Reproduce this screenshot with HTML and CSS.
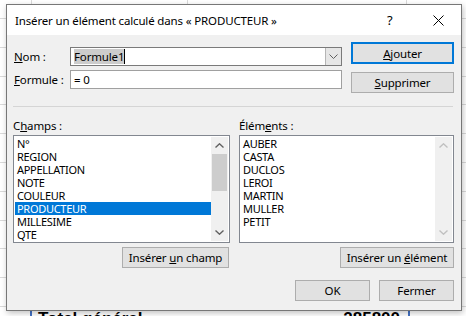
FILE: index.html
```html
<!DOCTYPE html>
<html lang="fr">
<head>
    <meta charset="UTF-8">
    <title>Insérer un élément calculé</title>
    <link rel="stylesheet" href="styles.css">
</head>
<body>

<div class="sheet">
    <div class="total-row">
        <span class="total-label">Total général</span>
        <span class="total-value">285800</span>
    </div>
</div>

<div class="dialog">
    <div class="titlebar">
        <span class="title">Insérer un élément calculé dans « PRODUCTEUR »</span>
        <span class="tb-help">?</span>
        <span class="tb-close">
            <svg width="11" height="11" viewBox="0 0 11 11"><path d="M0.5 0.5 L10.5 10.5 M10.5 0.5 L0.5 10.5" stroke="#000" stroke-width="1" fill="none"/></svg>
        </span>
    </div>

    <div class="content">
        <div class="top">
            <div class="fields">
                <div class="field-row">
                    <span class="label"><u>N</u>om :</span>
                    <div class="combo">
                        <span class="combo-text"><span class="sel">Formule1</span><span class="caret"></span></span>
                        <span class="combo-btn">
                            <svg width="9" height="5" viewBox="0 0 9 5"><path d="M0.5 0.5 L4.5 4.5 L8.5 0.5" stroke="#606060" fill="none"/></svg>
                        </span>
                    </div>
                </div>
                <div class="field-row">
                    <span class="label"><u>F</u>ormule :</span>
                    <div class="input">= 0</div>
                </div>
            </div>
            <div class="side-buttons">
                <button class="btn btn-default"><u>A</u>jouter</button>
                <button class="btn btn-side"><u>S</u>upprimer</button>
            </div>
        </div>

        <div class="sep"></div>

        <div class="lists">
            <div class="list-col col-fields">
                <div class="list-label">C<u>h</u>amps :</div>
                <div class="listbox">
                    <ul class="items">
                        <li>N°</li>
                        <li>REGION</li>
                        <li>APPELLATION</li>
                        <li>NOTE</li>
                        <li>COULEUR</li>
                        <li class="selected">PRODUCTEUR</li>
                        <li>MILLESIME</li>
                        <li>QTE</li>
                    </ul>
                    <div class="scrollbar">
                        <span class="arrow">
                            <svg width="9" height="5" viewBox="0 0 9 5"><path d="M0.5 4.5 L4.5 0.8 L8.5 4.5" stroke="#606060" stroke-width="1.4" fill="none"/></svg>
                        </span>
                        <span class="track"><span class="thumb"></span></span>
                        <span class="arrow">
                            <svg width="9" height="5" viewBox="0 0 9 5"><path d="M0.5 0.5 L4.5 4.2 L8.5 0.5" stroke="#606060" stroke-width="1.4" fill="none"/></svg>
                        </span>
                    </div>
                </div>
                <div class="col-actions">
                    <button class="btn btn-field">Insérer <u>u</u>n champ</button>
                </div>
            </div>

            <div class="list-col col-items">
                <div class="list-label">Élém<u>e</u>nts :</div>
                <div class="listbox">
                    <ul class="items">
                        <li>AUBER</li>
                        <li>CASTA</li>
                        <li>DUCLOS</li>
                        <li>LEROI</li>
                        <li>MARTIN</li>
                        <li>MULLER</li>
                        <li>PETIT</li>
                    </ul>
                    <div class="scrollbar disabled">
                        <span class="arrow">
                            <svg width="9" height="5" viewBox="0 0 9 5"><path d="M0.5 4.5 L4.5 0.8 L8.5 4.5" stroke="#c0c0c0" stroke-width="1.4" fill="none"/></svg>
                        </span>
                        <span class="track"></span>
                        <span class="arrow">
                            <svg width="9" height="5" viewBox="0 0 9 5"><path d="M0.5 0.5 L4.5 4.2 L8.5 0.5" stroke="#c0c0c0" stroke-width="1.4" fill="none"/></svg>
                        </span>
                    </div>
                </div>
                <div class="col-actions">
                    <button class="btn btn-item">Insérer un <u>é</u>lément</button>
                </div>
            </div>
        </div>

        <div class="footer">
            <button class="btn btn-footer">OK</button>
            <button class="btn btn-footer">Fermer</button>
        </div>
    </div>
</div>

</body>
</html>
```

FILE: styles.css
```css
body {
    margin: 0;
    padding: 0;
    width: 466px;
    height: 316px;
    overflow: hidden;
    font-family: "Noto Sans", "Open Sans", sans-serif;
    font-size: 11.5px;
    letter-spacing: -0.15px;
    color: #000;
    position: relative;
}

/* feuille Excel derrière la boîte */
.sheet {
    height: 316px;
    background-color: #fff;
    background-image:
        linear-gradient(to right, transparent 31px, #dadada 31px, #dadada 32px, transparent 32px),
        linear-gradient(to right, transparent 187px, #dadada 187px, #dadada 188px, transparent 188px),
        linear-gradient(to right, transparent 406px, #dadada 406px, #dadada 407px, transparent 407px),
        repeating-linear-gradient(to bottom, transparent 0, transparent 18px, #dadada 18px, #dadada 19px, transparent 19px, transparent 28.8px);
    padding-top: 309px;
    box-sizing: border-box;
}

.total-row {
    display: flex;
    margin-left: 30px;
    width: 376px;
    height: 7px;
    overflow: hidden;
    border-left: 2px solid #4472c4;
    border-right: 2px solid #4472c4;
    background: #fff;
    font-family: "Liberation Sans", Arial, sans-serif;
    font-weight: bold;
    font-size: 17px;
    letter-spacing: 0;
    line-height: 20px;
}

.total-label {
    padding-left: 6px;
    flex: 1;
}

.total-value {
    padding-right: 8px;
}

/* boîte de dialogue */
.dialog {
    position: absolute;
    left: 6px;
    top: 4px;
    width: 456px;
    height: 307px;
    box-sizing: border-box;
    border: 1px solid #777;
    background: #f0f0f0;
    box-shadow: 1px 2px 6px rgba(0, 0, 0, 0.25);
}

.titlebar {
    height: 30px;
    background: #fff;
    display: flex;
    align-items: center;
    padding-left: 8px;
}

.title {
    flex: 1;
}

.tb-help {
    width: 20px;
    font-size: 13px;
    margin-right: 26px;
}

.tb-close {
    width: 28px;
    display: flex;
    align-items: center;
}

.content {
    padding: 7px 7px 0 6px;
}

.top {
    display: flex;
    justify-content: space-between;
}

.fields {
    width: 329px;
    padding-top: 5px;
    display: flex;
    flex-direction: column;
    gap: 4px;
}

.field-row {
    display: flex;
    align-items: center;
}

.label {
    width: 57px;
    padding-left: 1px;
    box-sizing: border-box;
}

.combo, .input {
    width: 272px;
    height: 19px;
    box-sizing: border-box;
    background: #fff;
    display: flex;
    align-items: center;
}

.combo {
    border: 1px solid #7a7a7a;
}

.input {
    border: 1px solid #a0a0a0;
    padding-left: 3px;
}

.combo-text {
    flex: 1;
    display: flex;
    align-items: center;
    padding-left: 3px;
}

.sel {
    background: #cccccc;
    line-height: 15px;
}

.caret {
    width: 1px;
    height: 15px;
    background: #000;
}

.combo-btn {
    width: 16px;
    height: 17px;
    box-sizing: border-box;
    border-left: 1px solid #b5b5b5;
    background: #e6e6e6;
    display: flex;
    align-items: center;
    justify-content: center;
}

.side-buttons {
    width: 103px;
    display: flex;
    flex-direction: column;
    gap: 8px;
}

.btn {
    font-family: inherit;
    font-size: 11.5px;
    letter-spacing: -0.15px;
    color: #000;
    background: #e1e1e1;
    border: 1px solid #adadad;
    padding: 0;
    height: 21px;
    box-sizing: border-box;
    cursor: pointer;
}

.btn-default {
    height: 22px;
    border: 2px solid #0078d7;
}

.sep {
    margin: 13px 1px 0 0;
    height: 1px;
    background: #d5d5d5;
}

.lists {
    display: flex;
    gap: 9px;
    margin-top: 11px;
}

.list-col {
    display: flex;
    flex-direction: column;
}

.col-fields {
    width: 217px;
}

.col-items {
    width: 215px;
}

.list-label {
    height: 16px;
    line-height: 16px;
    margin-bottom: 1px;
}

.listbox {
    height: 108px;
    box-sizing: border-box;
    border: 1px solid #828790;
    background: #fff;
    display: flex;
    padding: 1px;
}

.items {
    list-style: none;
    margin: 0;
    padding: 0;
    flex: 1;
    font-size: 11px;
    letter-spacing: -0.3px;
}

.items li {
    height: 13px;
    line-height: 13px;
    padding-left: 2px;
}

.items li.selected {
    background: #0078d7;
    color: #fff;
}

.scrollbar {
    width: 17px;
    background: #f0f0f0;
    display: flex;
    flex-direction: column;
}

.arrow {
    height: 17px;
    display: flex;
    align-items: center;
    justify-content: center;
}

.track {
    flex: 1;
}

.thumb {
    display: block;
    margin: 0 1px;
    height: 37px;
    background: #cdcdcd;
}

.col-actions {
    display: flex;
    justify-content: flex-end;
    margin-top: 4px;
}

.btn-field {
    width: 107px;
    margin-right: 1px;
}

.btn-item {
    width: 114px;
}

.footer {
    display: flex;
    justify-content: flex-end;
    gap: 9px;
    margin-top: 12px;
}

.btn-footer {
    width: 75px;
}
```
